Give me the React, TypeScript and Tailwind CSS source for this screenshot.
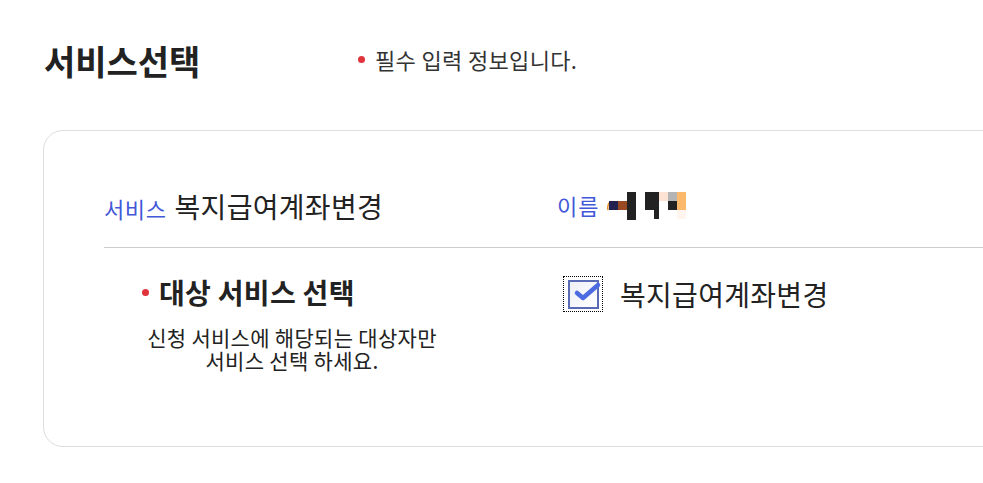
import React from "react";

const font = { fontFamily: '"Noto Sans CJK KR", "Noto Sans", sans-serif' };

function NameBlocks() {
  return (
    <svg width="86" height="32" viewBox="0 0 86 32" className="block">
      <path d="M5 12 Q2 15 3 20" stroke="#e8902a" strokeWidth="1.5" fill="none" />
      <rect x="4" y="11" width="9" height="9" fill="#23214f" />
      <rect x="13" y="11" width="9" height="9" fill="#9a4a22" />
      <rect x="22" y="2" width="9" height="28" fill="#222222" />
      <rect x="40" y="2" width="9" height="18" fill="#222222" />
      <rect x="49" y="2" width="5" height="27" fill="#222222" />
      <rect x="54" y="2" width="9" height="9" fill="#fde3d3" />
      <rect x="63" y="2" width="9" height="9" fill="#b5b5b5" />
      <rect x="63" y="11" width="9" height="9" fill="#222222" />
      <rect x="72" y="2" width="9" height="18" fill="#fdb96b" />
      <rect x="72" y="20" width="9" height="9" fill="#fff5ee" />
    </svg>
  );
}

function CheckBox() {
  return (
    <div className="w-[40px] h-[36px] border border-dotted border-black flex items-center justify-center">
      <div className="relative w-[31px] h-[29px] border-2 border-[#5a6bb5] bg-gradient-to-br from-[#eef0f8] to-white">
        <svg width="32" height="26" viewBox="0 0 32 26" className="absolute left-[2px] top-[-4px]">
          <path d="M5 15 L11 20 L26 7" stroke="#4d6be0" strokeWidth="4.5" strokeLinecap="round" strokeLinejoin="round" fill="none" />
        </svg>
      </div>
    </div>
  );
}

export default function App() {
  return (
    <div className="w-[983px] h-[483px] overflow-hidden bg-white text-[#222]" style={font}>
      <div className="pl-[43px] pt-[34px]">
        <div className="flex items-center h-[54px]">
          <h1 className="text-[34px] font-bold w-[315px] pl-[1px] leading-none">서비스선택</h1>
          <div className="flex items-center text-[22px] tracking-[0.35px] text-[#333] leading-none mb-[4px]">
            <span className="w-[7px] h-[7px] rounded-full bg-[#e0333c] mr-[10px]" />
            필수 입력 정보입니다.
          </div>
        </div>
        <div className="mt-[42px] w-[1100px] h-[317px] border border-[#dddddd] rounded-[20px] pl-[60px]">
          <div className="flex items-center h-[117px] pt-[33px] border-b border-[#cccccc]">
            <div className="w-[453px] flex items-baseline">
              <span className="text-[22px] tracking-[0.6px] text-[#4258d8] mr-[8px]">서비스</span>
              <span className="text-[28px] tracking-[0.3px]">복지급여계좌변경</span>
            </div>
            <div className="flex items-center">
              <span className="text-[22px] tracking-[1px] text-[#4258d8] mr-[6px]">이름</span>
              <NameBlocks />
            </div>
          </div>
          <div className="flex pt-[27px]">
            <div className="w-[453px]">
              <div className="flex items-center pl-[38px] h-[34px]">
                <span className="w-[7px] h-[7px] rounded-full bg-[#e0333c] mr-[10px]" />
                <span className="text-[28px] tracking-[0.3px] font-bold leading-none">대상 서비스 선택</span>
              </div>
              <div className="w-[376px] text-center text-[21px] tracking-[0.3px] leading-[23px] mt-[17px]">
                신청 서비스에 해당되는 대상자만
                <br />
                서비스 선택 하세요.
              </div>
            </div>
            <div className="flex items-center pl-[6px] h-[36px] mt-[1px]">
              <CheckBox />
              <span className="text-[28px] tracking-[0.3px] ml-[17px] leading-none">복지급여계좌변경</span>
            </div>
          </div>
        </div>
      </div>
    </div>
  );
}
